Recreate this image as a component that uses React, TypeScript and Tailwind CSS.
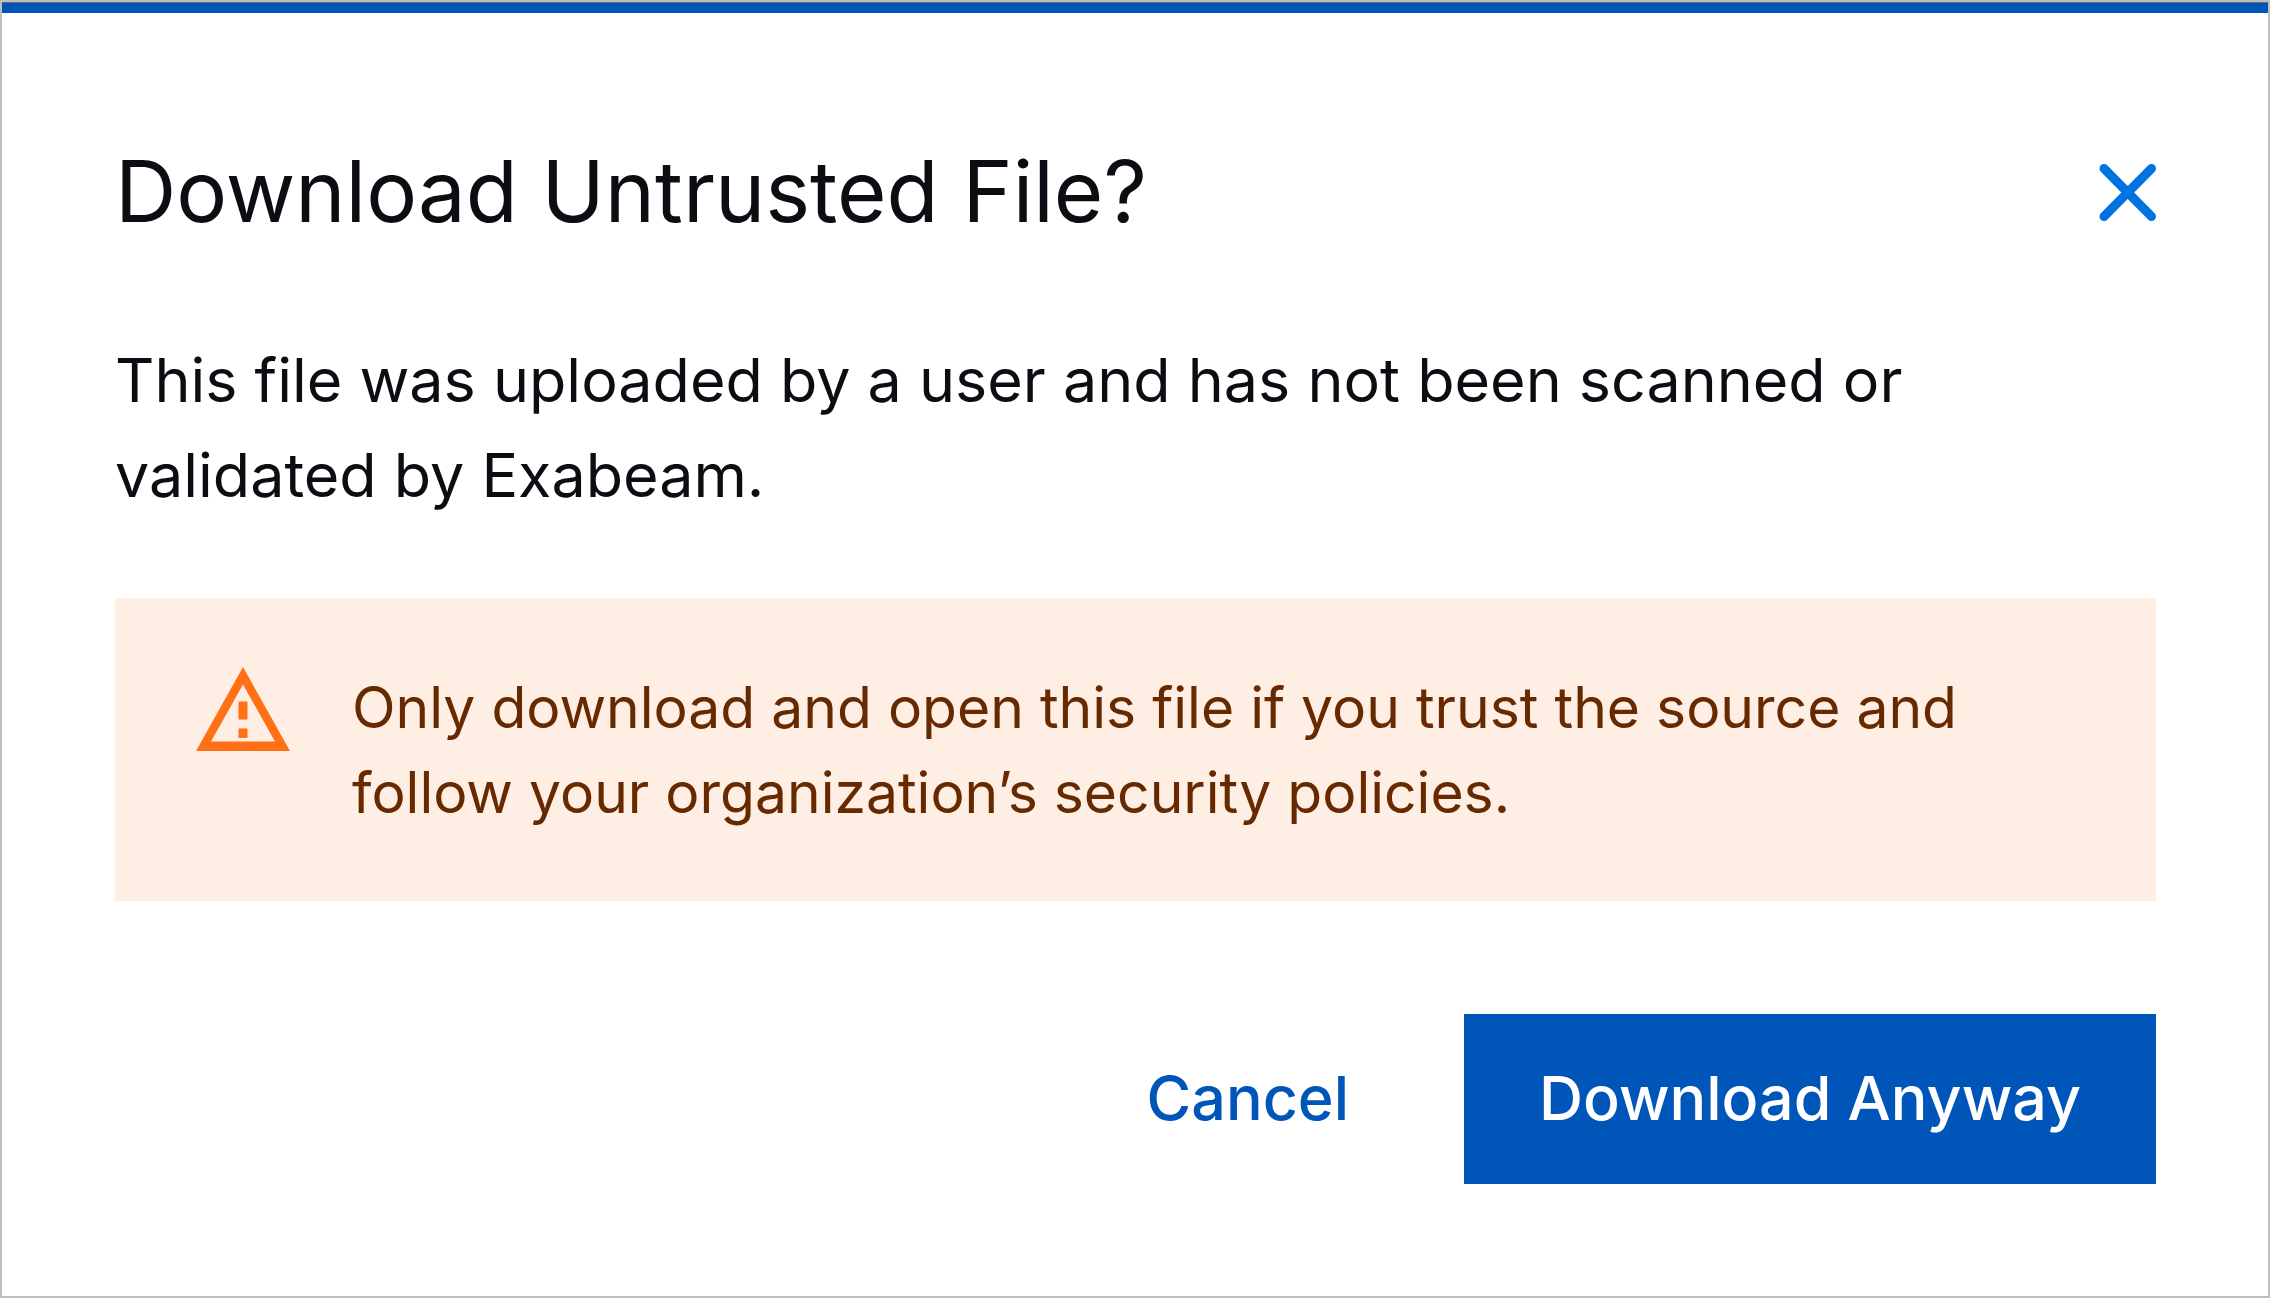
import React from "react";

export default function App() {
  return (
    <div
      role="dialog"
      aria-labelledby="dialog-title"
      className="min-h-screen border-2 border-[#bebebe] bg-white font-['Inter',sans-serif] text-[#0c0c12]"
    >
      <div className="h-[11px] border-t border-[#666b73] bg-[#0055b9]" />
      <div className="pt-[131px] pr-[112px] pb-[112px] pl-[113px]">
        <header className="flex items-center justify-between">
          <h1 id="dialog-title" className="text-[85px] leading-[96px]">
            Download Untrusted File?
          </h1>
          <button type="button" aria-label="Close" className="text-[#0073e3]">
            <svg viewBox="0 0 57 57" className="size-[57px]" fill="none" stroke="currentColor" strokeWidth="9" strokeLinecap="round">
              <path d="M5 4.5 52.500 52.500M52.500 4.500 5 52.500" />
            </svg>
          </button>
        </header>
        <p className="mt-[93px] max-w-[1860px] text-[61px] leading-[95px]">
          This file was uploaded by a user and has not been scanned or validated by Exabeam.
        </p>
        <section className="mt-[75px] flex items-start gap-[62px] bg-[#ffeee4] px-[81px] pt-[67px] pb-[66px] text-[#662900]">
          <svg viewBox="0 0 94 86" className="h-[86px] w-[94px] shrink-0" fill="#ff7017">
            <path fillRule="evenodd" d="M47 2 94 86H0ZM47 19.500 15 76.500H79Z" />
            <path d="M42.500 36.500h9v18h-9ZM42.500 63.500h9v9.500h-9Z" />
          </svg>
          <p className="max-w-[1640px] text-[57px] leading-[85px]">
            Only download and open this file if you trust the source and follow your organization’s security policies.
          </p>
        </section>
        <footer className="mt-[113px] flex items-center justify-end text-[61px] font-medium">
          <button type="button" className="mr-[115px] text-[#0055b9]">Cancel</button>
          <button type="button" className="h-[170px] bg-[#0055b9] px-[75px] text-white">Download Anyway</button>
        </footer>
      </div>
    </div>
  );
}
